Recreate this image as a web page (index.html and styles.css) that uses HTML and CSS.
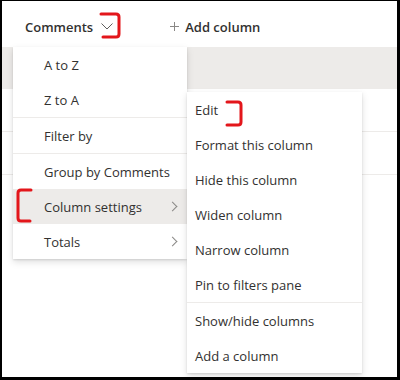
FILE: index.html
```html
<!DOCTYPE html>
<html lang="en">
<head>
    <meta charset="UTF-8">
    <title>Column menu</title>
    <link rel="stylesheet" href="styles.css">
</head>
<body>
    <div class="frame">
        <div class="list-header">
            <div class="col-title">
                Comments
                <svg class="chevron-down" width="12" height="7" viewBox="0 0 12 7"><path d="M0.5 0.5 L6 6 L11.5 0.5" fill="none" stroke="#605e5c" stroke-width="1"/></svg>
            </div>
            <div class="add-col">
                <svg class="plus" width="9" height="9" viewBox="0 0 9 9"><path d="M4.5 0 V9 M0 4.5 H9" stroke="#8a8886" stroke-width="1"/></svg>
                Add column
            </div>
        </div>
        <div class="row row-selected"></div>
        <div class="row"></div>
        <div class="row"></div>

        <!-- column header menu -->
        <ul class="menu main-menu">
            <li class="item">A to Z</li>
            <li class="item">Z to A</li>
            <li class="divider"></li>
            <li class="item">Filter by</li>
            <li class="divider"></li>
            <li class="item">Group by Comments</li>
            <li class="item active">Column settings <span class="chev"></span></li>
            <li class="item">Totals <span class="chev"></span></li>
        </ul>

        <ul class="menu sub-menu">
            <li class="item">Edit</li>
            <li class="item">Format this column</li>
            <li class="item">Hide this column</li>
            <li class="item">Widen column</li>
            <li class="item">Narrow column</li>
            <li class="item">Pin to filters pane</li>
            <li class="divider"></li>
            <li class="item">Show/hide columns</li>
            <li class="item">Add a column</li>
        </ul>

        <!-- red marker annotations -->
        <svg class="mark mark-header" width="26" height="30" viewBox="0 0 26 30"><path d="M2 3 H17 Q20 3 20 6 V23 Q20 26 17 26 H4" fill="none" stroke="#e3161b" stroke-width="3" stroke-linecap="round"/></svg>
        <svg class="mark mark-edit" width="22" height="30" viewBox="0 0 22 30"><path d="M3 3 H14 Q17 3 17 6 V23 Q17 26 14 26 H3" fill="none" stroke="#e3161b" stroke-width="3" stroke-linecap="round"/></svg>
        <svg class="mark mark-settings" width="20" height="38" viewBox="0 0 20 38"><path d="M16 3 H6 Q3 3 3 6 V31 Q3 34 6 34 H15" fill="none" stroke="#e3161b" stroke-width="3" stroke-linecap="round"/></svg>
    </div>
</body>
</html>
```

FILE: styles.css
```css
body {
    margin: 0;
    font-family: 'Open Sans', 'Noto Sans', sans-serif;
    color: #323130;
}
.frame {
    position: relative;
    width: 395px;
    height: 376px;
    border-style: solid;
    border-color: #000;
    border-width: 1px 3px 3px 2px;
    background: #fff;
    overflow: hidden;
}
.list-header {
    height: 46px;
    box-sizing: border-box;
    padding-top: 5px;
    display: flex;
    align-items: center;
    font-size: 13px;
    font-weight: 600;
}
.col-title {
    display: flex;
    align-items: center;
    margin-left: 23px;
}
.chevron-down {
    margin-left: 8px;
}
.add-col {
    display: flex;
    align-items: center;
    margin-left: 57px;
}
.plus {
    margin-right: 6px;
}
.row {
    height: 42px;
    border-bottom: 1px solid #edebe9;
}
.row-selected {
    background: #edebe9;
    border-bottom: none;
}
.menu {
    position: absolute;
    margin: 0;
    padding: 0;
    list-style: none;
    background: #fff;
    font-size: 13px;
    box-shadow: 0 3.2px 7.2px rgba(0,0,0,0.13), 0 0.6px 1.8px rgba(0,0,0,0.11);
}
.main-menu {
    left: 11px;
    top: 46px;
    width: 174px;
}
.sub-menu {
    left: 185px;
    top: 91px;
    width: 175px;
}
.item {
    position: relative;
    height: 35px;
    display: flex;
    align-items: center;
}
.main-menu .item {
    padding-left: 31px;
}
.sub-menu .item {
    padding-left: 8px;
}
.item.active {
    background: #edebe9;
}
.divider {
    height: 1px;
    background: #edebe9;
}
.chev {
    position: absolute;
    right: 11px;
    top: 14px;
    width: 6px;
    height: 6px;
    border-top: 1px solid #8a8886;
    border-right: 1px solid #8a8886;
    transform: rotate(45deg);
}
.mark {
    position: absolute;
}
.mark-header {
    left: 97px;
    top: 10px;
}
.mark-edit {
    left: 222px;
    top: 98px;
}
.mark-settings {
    left: 13px;
    top: 186px;
}
```
